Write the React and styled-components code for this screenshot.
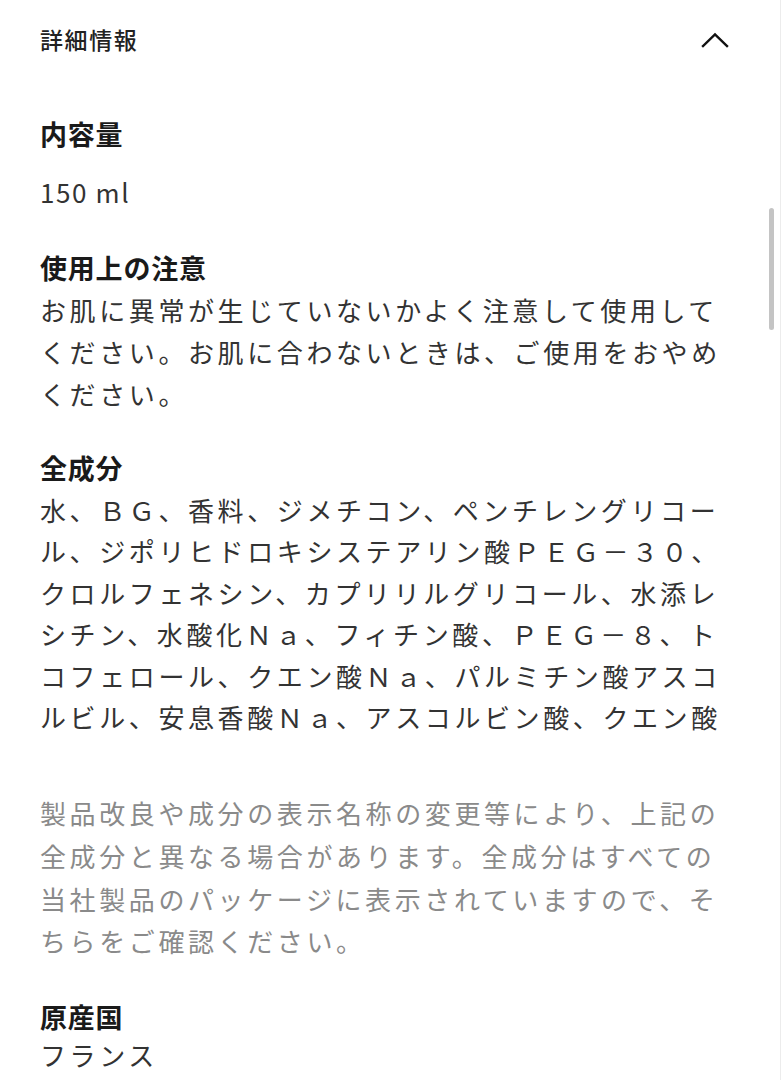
import React from 'react';
import styled, { createGlobalStyle } from 'styled-components';

const GlobalStyle = createGlobalStyle`
  html, body {
    margin: 0;
    padding: 0;
    background: #fff;
  }
  body {
    font-family: "Noto Sans CJK JP", "Noto Sans", sans-serif;
    color: #333;
  }
`;

const Page = styled.div`
  position: relative;
  width: 781px;
  height: 1080px;
  overflow: hidden;
  box-sizing: border-box;
  padding: 18px 51px 0 40px;
`;

const HeaderRow = styled.div`
  display: flex;
  align-items: center;
  justify-content: space-between;
  height: 42px;
`;

const HeaderTitle = styled.h2`
  margin: 0;
  font-size: 23px;
  font-weight: 500;
  letter-spacing: 1.6px;
  color: #222;
  line-height: 42px;
`;

const Chevron = styled.svg`
  width: 28px;
  height: 16px;
  margin-right: 1px;
  margin-top: 2px;
  display: block;
`;

const Body = styled.div`
  margin-top: 53px;
`;

const Section = styled.section`
  margin-bottom: ${(p) => p.$gap ?? 34}px;
`;

const Heading = styled.h3`
  margin: 0;
  font-size: 27px;
  font-weight: 700;
  letter-spacing: 0.8px;
  line-height: 42px;
  color: #1a1a1a;
`;

const Text = styled.p`
  margin: ${(p) => p.$top || 0}px 0 0;
  font-size: 26px;
  font-weight: 400;
  letter-spacing: ${(p) => p.$spacing ?? 3.6}px;
  line-height: ${(p) => p.$lh || 42}px;
  color: ${(p) => (p.$muted ? '#8a8a8a' : '#333')};
`;

const ScrollThumb = styled.div`
  position: absolute;
  right: 7px;
  top: 208px;
  width: 5px;
  height: 122px;
  border-radius: 3px;
  background: #c4c4c4;
`;

const EdgeLine = styled.div`
  position: absolute;
  right: 0;
  top: 0;
  bottom: 0;
  width: 1px;
  background: #ececec;
`;

const App = () => {
  return (
    <>
      <GlobalStyle />
      <Page>
        <HeaderRow>
          <HeaderTitle>詳細情報</HeaderTitle>
          <Chevron viewBox="0 0 28 16" fill="none">
            <polyline
              points="2,14 14,2.5 26,14"
              stroke="#111"
              strokeWidth="2.4"
              strokeLinecap="square"
            />
          </Chevron>
        </HeaderRow>

        <Body>
          <Section>
            <Heading>内容量</Heading>
            <Text $top={16} $spacing={1.6}>150 ml</Text>
          </Section>

          <Section $gap={32}>
            <Heading>使用上の注意</Heading>
            <Text>
              お肌に異常が生じていないかよく注意して使用してください。お肌に合わないときは、ご使用をおやめください。
            </Text>
          </Section>

          <Section $gap={55}>
            <Heading>全成分</Heading>
            <Text $lh={41.4}>
              水、ＢＧ、香料、ジメチコン、ペンチレングリコール、ジポリヒドロキシステアリン酸ＰＥＧ－３０、クロルフェネシン、カプリリルグリコール、水添レシチン、水酸化Ｎａ、フィチン酸、ＰＥＧ－８、トコフェロール、クエン酸Ｎａ、パルミチン酸アスコルビル、安息香酸Ｎａ、アスコルビン酸、クエン酸
            </Text>
          </Section>

          <Section $gap={33}>
            <Text $muted $lh={42.6}>
              製品改良や成分の表示名称の変更等により、上記の全成分と異なる場合があります。全成分はすべての当社製品のパッケージに表示されていますので、そちらをご確認ください。
            </Text>
          </Section>

          <Section>
            <Heading>原産国</Heading>
            <Text $top={-4}>フランス</Text>
          </Section>
        </Body>

        <ScrollThumb />
        <EdgeLine />
      </Page>
    </>
  );
};

export default App;
